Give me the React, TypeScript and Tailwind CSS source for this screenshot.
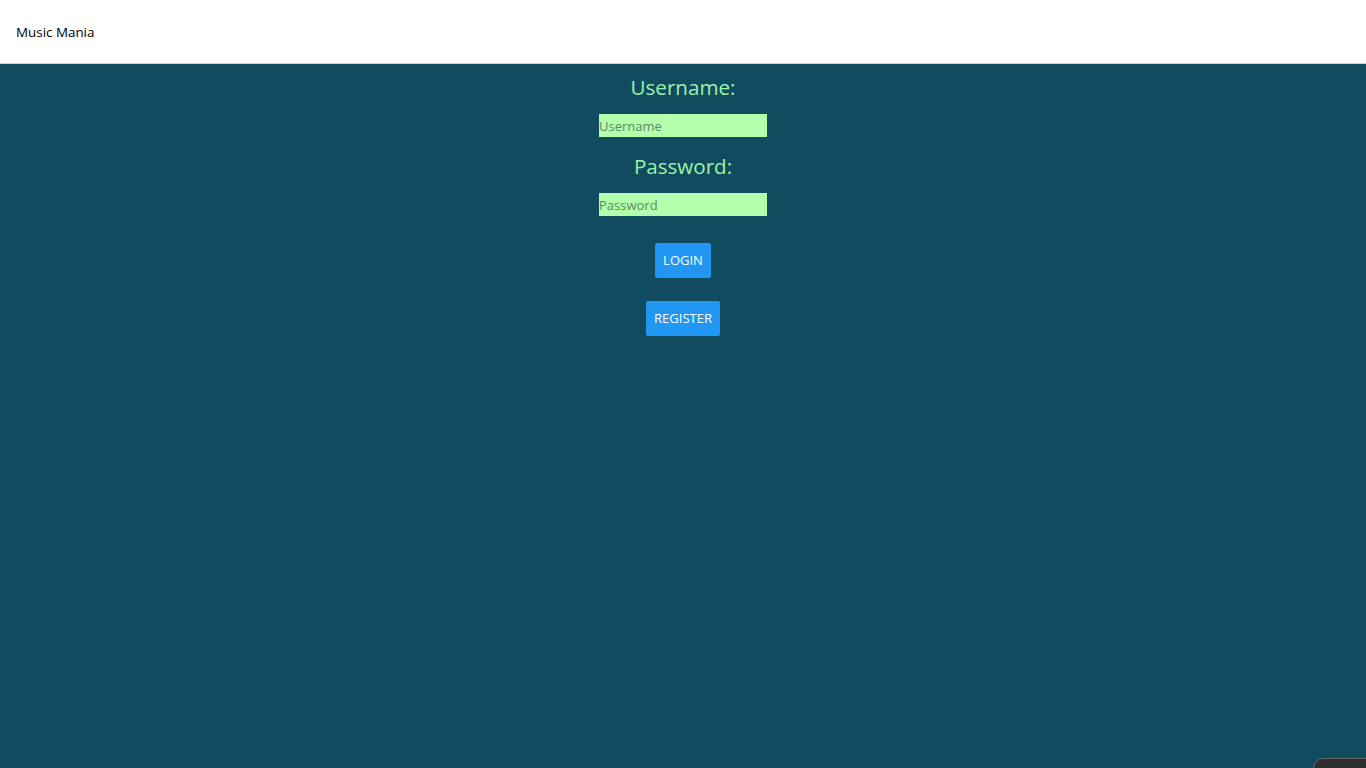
export default function App() {
  return (
    <div
      className="min-h-screen bg-[#114b5f] relative overflow-hidden"
      style={{ fontFamily: '"Open Sans", "Noto Sans", sans-serif' }}
    >
      <header className="h-16 bg-white border-b border-[#d0d4d6] flex items-center px-4 pt-[2px]">
        <span className="text-[13.4px] text-black">Music Mania</span>
      </header>
      <main className="flex flex-col items-center pt-[7px]">
        <label className="text-[20.6px] leading-[33px] text-[#9df4a6]">Username:</label>
        <input
          placeholder="Username"
          className="mt-[10px] w-[168px] h-[23px] bg-[#b4ffae] text-[13px] text-[#3c5a3c] placeholder:text-[#5d8a5a] outline-none px-0"
        />
        <label className="mt-[13px] text-[20.6px] leading-[33px] text-[#9df4a6]">Password:</label>
        <input
          type="password"
          placeholder="Password"
          className="mt-[10px] w-[168px] h-[23px] bg-[#b4ffae] text-[13px] text-[#3c5a3c] placeholder:text-[#5d8a5a] outline-none px-0"
        />
        <button className="mt-[27px] h-[35px] px-2 bg-[#2196f3] text-white text-[13px] rounded-[2px]">
          LOGIN
        </button>
        <button className="mt-[23px] h-[35px] px-2 bg-[#2196f3] text-white text-[13px] rounded-[2px]">
          REGISTER
        </button>
      </main>
      <div className="absolute left-[1313px] top-[758px] w-[80px] h-[30px] rounded-tl-[10px] bg-[#2e2e30] border border-[#6b6b6b]" />
    </div>
  );
}
